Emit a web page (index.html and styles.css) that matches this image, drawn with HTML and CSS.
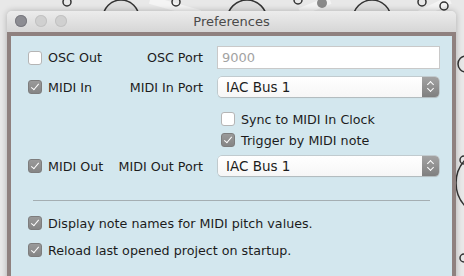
FILE: index.html
```html
<!DOCTYPE html>
<html lang="en">
<head>
    <meta charset="UTF-8">
    <title>Preferences</title>
    <link rel="stylesheet" href="styles.css">
</head>
<body>
    <div class="desktop">
        <svg class="backdrop" width="464" height="276" viewBox="0 0 464 276">
            <path d="M150 0 L200 14 M300 12 L330 0 M420 14 L450 0" stroke="#f4f4f4" stroke-width="8" fill="none"/>
            <circle cx="67" cy="2" r="4" fill="none" stroke="#333" stroke-width="1.5"/>
            <circle cx="121" cy="18" r="18" fill="#dedede" stroke="#333" stroke-width="1.5"/>
            <circle cx="176" cy="2" r="4" fill="none" stroke="#333" stroke-width="1.5"/>
            <circle cx="247" cy="20" r="20" fill="#dedede" stroke="#333" stroke-width="1.5"/>
            <circle cx="298" cy="0" r="4" fill="none" stroke="#333" stroke-width="1.5"/>
            <circle cx="322" cy="3" r="5" fill="#8a8a8a"/>
            <circle cx="372" cy="19" r="19" fill="#dedede" stroke="#333" stroke-width="1.5"/>
            <circle cx="422" cy="2" r="4" fill="none" stroke="#333" stroke-width="1.5"/>
            <circle cx="444" cy="6" r="4" fill="none" stroke="#333" stroke-width="1.5"/>
            <circle cx="466" cy="64" r="8" fill="none" stroke="#333" stroke-width="1.5"/>
            <circle cx="490" cy="183" r="34" fill="none" stroke="#333" stroke-width="1.5"/>
            <circle cx="464" cy="160" r="4" fill="none" stroke="#333" stroke-width="1.5"/>
            <circle cx="464" cy="258" r="4" fill="none" stroke="#333" stroke-width="1.5"/>
        </svg>

        <div class="window">
            <div class="titlebar">
                <div class="lights">
                    <span class="light light-close"></span>
                    <span class="light"></span>
                    <span class="light"></span>
                </div>
                <div class="title">Preferences</div>
            </div>
            <div class="frame">
                <div class="content">
                    <div class="row row-osc">
                        <label class="check"><span class="box"></span>OSC Out</label>
                        <span class="port-label">OSC Port</span>
                        <input class="field" type="text" placeholder="9000">
                    </div>
                    <div class="row row-midi-in">
                        <label class="check"><span class="box on"></span>MIDI In</label>
                        <span class="port-label">MIDI In Port</span>
                        <div class="popup"><span>IAC Bus 1</span><span class="stepper"></span></div>
                    </div>
                    <div class="sub sub-sync">
                        <label class="check"><span class="box"></span>Sync to MIDI In Clock</label>
                    </div>
                    <div class="sub sub-trigger">
                        <label class="check"><span class="box on"></span>Trigger by MIDI note</label>
                    </div>
                    <div class="row row-midi-out">
                        <label class="check"><span class="box on"></span>MIDI Out</label>
                        <span class="port-label">MIDI Out Port</span>
                        <div class="popup"><span>IAC Bus 1</span><span class="stepper"></span></div>
                    </div>
                    <hr class="separator">
                    <div class="option option-names">
                        <label class="check"><span class="box on"></span>Display note names for MIDI pitch values.</label>
                    </div>
                    <div class="option option-reload">
                        <label class="check"><span class="box on"></span>Reload last opened project on startup.</label>
                    </div>
                </div>
            </div>
        </div>
    </div>
</body>
</html>
```

FILE: styles.css
```css
body {
    margin: 0;
    font-family: "DejaVu Sans", Verdana, sans-serif;
    font-size: 12.7px;
    color: #1c1c1c;
}
.desktop {
    position: relative;
    width: 464px;
    height: 276px;
    overflow: hidden;
    background: #e8e8e8;
}
.backdrop {
    position: absolute;
    left: 0;
    top: 0;
}
.window {
    position: absolute;
    left: 7px;
    top: 11px;
    width: 449px;
    height: 280px;
    box-shadow: 0 0 6px rgba(0,0,0,0.25);
    border-radius: 5px 5px 0 0;
}
.titlebar {
    position: relative;
    height: 21px;
    background: linear-gradient(#ececec, #d6d6d6);
    border-radius: 5px 5px 0 0;
    display: flex;
    align-items: center;
    justify-content: center;
}
.lights {
    position: absolute;
    left: 8px;
    top: 4px;
    display: flex;
    gap: 8px;
}
.light {
    width: 12px;
    height: 12px;
    border-radius: 50%;
    background: #d0d0d0;
    box-shadow: inset 0 0 0 1px #c2c2c2;
}
.light-close {
    background: #8d8d93;
    box-shadow: inset 0 0 0 1px #7a7a80;
}
.title {
    font-size: 13px;
    color: #4a4a4a;
}
.frame {
    border: 4px solid #8f817f;
    border-bottom: none;
    height: 259px;
    background: #d3e7ee;
}
.content {
    padding: 10px 12px 0 17px;
}
.row {
    display: flex;
    align-items: center;
}
.check {
    display: flex;
    align-items: center;
    gap: 6px;
    white-space: nowrap;
}
.box {
    width: 14px;
    height: 14px;
    box-sizing: border-box;
    border-radius: 3px;
    background: #fff;
    border: 1px solid #b5b5b5;
    position: relative;
    flex: none;
}
.box.on {
    background: linear-gradient(#9a9a9a, #858585);
    border-color: #7d7d7d;
}
.box.on::after {
    content: "";
    position: absolute;
    left: 4px;
    top: 1px;
    width: 3px;
    height: 7px;
    border: solid #fff;
    border-width: 0 1.5px 1.5px 0;
    transform: rotate(40deg);
}
.row .check {
    width: 80px;
}
.port-label {
    width: 95px;
    text-align: right;
    margin-right: 14px;
    white-space: nowrap;
}
.field {
    width: 223px;
    height: 23px;
    box-sizing: border-box;
    border: 1px solid #c9c9c9;
    border-radius: 0;
    padding: 0 4px;
    font-family: inherit;
    font-size: 13px;
    background: #fff;
    outline: none;
}
.field::placeholder {
    color: #a3a3a3;
}
.popup {
    width: 221px;
    height: 20px;
    margin-left: 1px;
    box-sizing: border-box;
    background: linear-gradient(#ffffff, #f6f6f6);
    border-radius: 4px;
    box-shadow: 0 0 0 0.5px #b0b0b0, 0 1px 1px rgba(0,0,0,0.15);
    display: flex;
    align-items: center;
    justify-content: space-between;
    padding-left: 8px;
    font-size: 13.5px;
    overflow: hidden;
}
.stepper {
    width: 17px;
    height: 20px;
    background: linear-gradient(#a3a3a3, #7f7f7f);
    position: relative;
}
.stepper::before,
.stepper::after {
    content: "";
    position: absolute;
    left: 6px;
    width: 4px;
    height: 4px;
    border: solid #fff;
    border-width: 1.5px 0 0 1.5px;
}
.stepper::before {
    top: 5px;
    transform: rotate(45deg);
}
.stepper::after {
    top: 9px;
    transform: rotate(225deg);
}
.row-osc {
    height: 23px;
}
.row-midi-in {
    height: 20px;
    margin-top: 8px;
}
.sub {
    margin-left: 193px;
    height: 14px;
    display: flex;
    align-items: center;
}
.sub-sync {
    margin-top: 15px;
}
.sub-trigger {
    margin-top: 7px;
}
.row-midi-out {
    height: 20px;
    margin-top: 9px;
}
.separator {
    border: none;
    border-top: 1px solid #a4aeb2;
    margin: 24px 10px 0 5px;
    height: 0;
}
.option {
    height: 14px;
    display: flex;
    align-items: center;
}
.option-names {
    margin-top: 15px;
}
.option-reload {
    margin-top: 13px;
}
```
